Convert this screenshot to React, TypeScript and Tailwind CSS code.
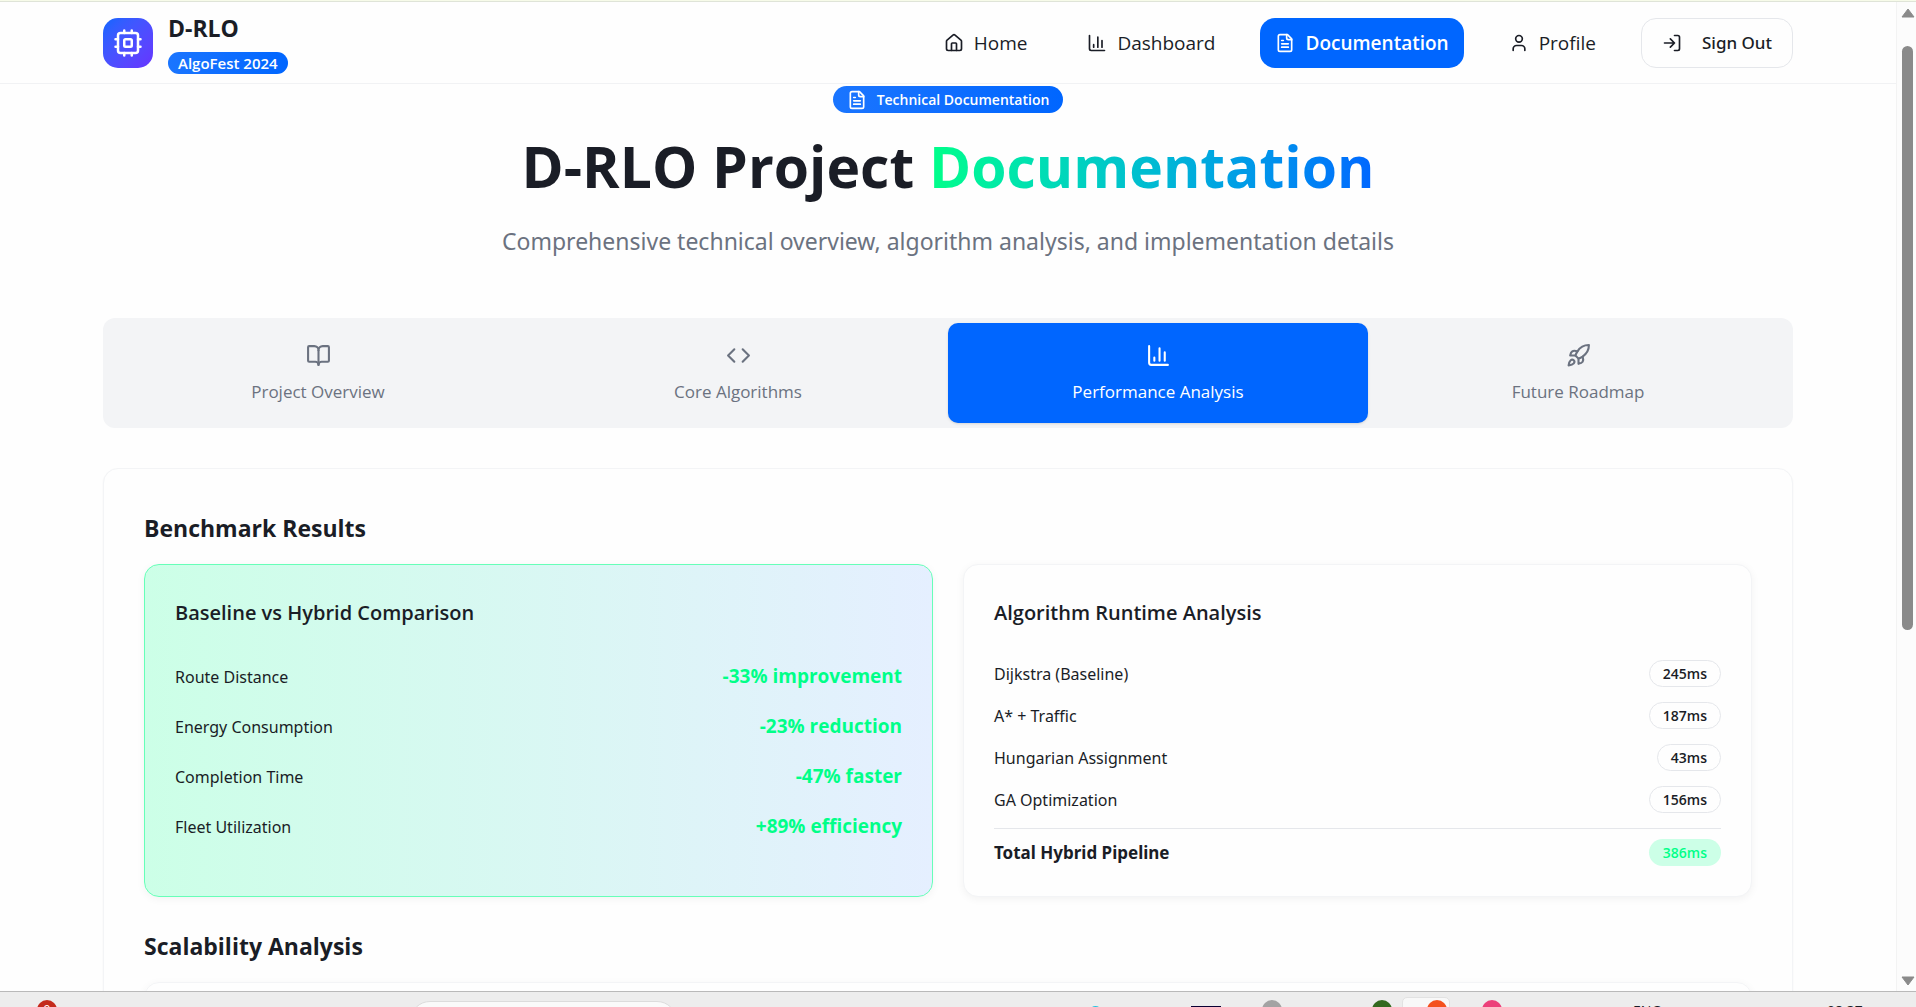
import React from "react";
import type { ReactNode } from "react";

function Icon({ className, children }: { className: string; children: ReactNode }) {
  return (
    <svg
      viewBox="0 0 24 24"
      fill="none"
      stroke="currentColor"
      strokeWidth={2}
      strokeLinecap="round"
      strokeLinejoin="round"
      aria-hidden="true"
      className={className}
    >
      {children}
    </svg>
  );
}

const cpuShape = (
  <>
    <rect x="4" y="4" width="16" height="16" rx="2" />
    <rect x="9" y="9" width="6" height="6" rx="1" />
    <path d="M15 2v2M15 20v2M2 15h2M2 9h2M20 15h2M20 9h2M9 2v2M9 20v2" />
  </>
);
const homeShape = (
  <>
    <path d="M15 21v-8a1 1 0 0 0-1-1h-4a1 1 0 0 0-1 1v8" />
    <path d="M3 10a2 2 0 0 1 .709-1.528l7-5.999a2 2 0 0 1 2.582 0l7 5.999A2 2 0 0 1 21 10v9a2 2 0 0 1-2 2H5a2 2 0 0 1-2-2z" />
  </>
);
const chartShape = (
  <>
    <path d="M3 3v16a2 2 0 0 0 2 2h16" />
    <path d="M18 17V9M13 17V5M8 17v-3" />
  </>
);
const fileShape = (
  <>
    <path d="M15 2H6a2 2 0 0 0-2 2v16a2 2 0 0 0 2 2h12a2 2 0 0 0 2-2V7Z" />
    <path d="M14 2v4a2 2 0 0 0 2 2h4" />
    <path d="M10 9H8M16 13H8M16 17H8" />
  </>
);
const userShape = (
  <>
    <path d="M19 21v-2a4 4 0 0 0-4-4H9a4 4 0 0 0-4 4v2" />
    <circle cx="12" cy="7" r="4" />
  </>
);
const logInShape = (
  <>
    <path d="M15 3h4a2 2 0 0 1 2 2v14a2 2 0 0 1-2 2h-4" />
    <path d="m10 17 5-5-5-5M15 12H3" />
  </>
);
const bookShape = (
  <>
    <path d="M12 7v14" />
    <path d="M3 18a1 1 0 0 1-1-1V4a1 1 0 0 1 1-1h5a4 4 0 0 1 4 4 4 4 0 0 1 4-4h5a1 1 0 0 1 1 1v13a1 1 0 0 1-1 1h-6a3 3 0 0 0-3 3 3 3 0 0 0-3-3z" />
  </>
);
const codeShape = <path d="m16 18 6-6-6-6M8 6l-6 6 6 6" />;
const rocketShape = (
  <>
    <path d="M4.5 16.5c-1.5 1.26-2 5-2 5s3.74-.5 5-2c.71-.84.7-2.13-.09-2.91a2.18 2.18 0 0 0-2.91-.09z" />
    <path d="m12 15-3-3a22 22 0 0 1 2-3.95A12.88 12.88 0 0 1 22 2c0 2.72-.78 7.5-6 11a22.35 22.35 0 0 1-4 2z" />
    <path d="M9 12H4s.55-3.03 2-4c1.62-1.08 5 0 5 0" />
    <path d="M12 15v5s3.03-.55 4-2c1.08-1.62 0-5 0-5" />
  </>
);

const navItems = [
  { label: "Home", shape: homeShape, active: false },
  { label: "Dashboard", shape: chartShape, active: false },
  { label: "Documentation", shape: fileShape, active: true },
  { label: "Profile", shape: userShape, active: false },
];

const tabs = [
  { label: "Project Overview", shape: bookShape, active: false },
  { label: "Core Algorithms", shape: codeShape, active: false },
  { label: "Performance Analysis", shape: chartShape, active: true },
  { label: "Future Roadmap", shape: rocketShape, active: false },
];

const comparison = [
  { label: "Route Distance", value: "-33% improvement" },
  { label: "Energy Consumption", value: "-23% reduction" },
  { label: "Completion Time", value: "-47% faster" },
  { label: "Fleet Utilization", value: "+89% efficiency" },
];

const runtimes = [
  { label: "Dijkstra (Baseline)", value: "245ms" },
  { label: "A* + Traffic", value: "187ms" },
  { label: "Hungarian Assignment", value: "43ms" },
  { label: "GA Optimization", value: "156ms" },
];

function Header() {
  return (
    <header className="flex items-center justify-between border-b border-[#f1f2f4] px-[103px] pt-[10px] pb-[9px]">
      <div className="flex items-center gap-[15px]">
        <div className="flex size-[50px] items-center justify-center rounded-[15px] bg-linear-to-br from-[#0066ff] to-[#6633ff] text-white">
          <Icon className="size-[30px]">{cpuShape}</Icon>
        </div>
        <div className="flex flex-col items-start gap-[7px]">
          <span className="text-[23px] leading-[33px] font-bold">D-RLO</span>
          <span className="rounded-full bg-linear-to-r from-[#1a75ff] to-[#0066ff] px-[10px] text-[15px] leading-[22px] font-semibold text-white">
            AlgoFest 2024
          </span>
        </div>
      </div>
      <nav className="flex items-center gap-[30px]" aria-label="Main">
        {navItems.map((item) => (
          <a
            key={item.label}
            href="#"
            aria-current={item.active ? "page" : undefined}
            className={
              item.active
                ? "flex h-[50px] items-center gap-[10px] rounded-[15px] bg-[#0066ff] px-[15px] text-[19px] font-semibold text-white"
                : "flex h-[50px] items-center gap-[10px] rounded-[15px] px-[15px] text-[19px] font-medium"
            }
          >
            <Icon className="size-5">{item.shape}</Icon>
            {item.label}
          </a>
        ))}
        <button
          type="button"
          className="flex h-[50px] items-center gap-5 rounded-[15px] border border-[#e5e7eb] px-5 font-['Noto_Sans','Open_Sans',sans-serif] text-[17px] font-medium"
        >
          <Icon className="size-5">{logInShape}</Icon>
          Sign Out
        </button>
      </nav>
    </header>
  );
}

function Hero() {
  return (
    <section className="flex flex-col items-center pt-0.5">
      <span className="flex h-[27px] items-center gap-[10px] rounded-full bg-linear-to-r from-[#1a75ff] to-[#0066ff] px-[14px] text-[14px] font-semibold text-white">
        <Icon className="size-5">{fileShape}</Icon>
        Technical Documentation
      </span>
      <h1 className="mt-[23px] text-[57px] leading-[60px] font-bold">
        D-RLO Project{" "}
        <span className="bg-linear-to-r from-[#00ff88] to-[#0066ff] bg-clip-text text-transparent">Documentation</span>
      </h1>
      <p className="mt-7 font-['Noto_Sans','Open_Sans',sans-serif] text-[23px] leading-[35px] text-[#6b7280]">
        Comprehensive technical overview, algorithm analysis, and implementation details
      </p>
    </section>
  );
}

function Tabs() {
  return (
    <div role="tablist" className="mx-[103px] mt-[59px] grid grid-cols-4 rounded-[12px] bg-[#f3f4f6] p-[5px]">
      {tabs.map((tab) => (
        <button
          key={tab.label}
          type="button"
          role="tab"
          aria-selected={tab.active}
          className={
            tab.active
              ? "flex flex-col items-center gap-3 rounded-[10px] bg-[#0066ff] py-5 text-[17px] leading-[23px] font-medium text-white shadow-sm"
              : "flex flex-col items-center gap-3 rounded-[10px] py-5 text-[17px] leading-[23px] font-medium text-[#6b7280]"
          }
        >
          <Icon className="size-[25px]">{tab.shape}</Icon>
          {tab.label}
        </button>
      ))}
    </div>
  );
}

function Results() {
  return (
    <section className="mx-[103px] mt-10 rounded-[15px] border border-[#f3f4f6] bg-[#fefefe] p-10 shadow-xs">
      <h2 className="mb-4 text-[23px] leading-[39px] font-bold">Benchmark Results</h2>
      <div className="grid grid-cols-2 gap-[30px]">
        <section className="rounded-[15px] border border-[#66ffb8] bg-linear-to-r from-[#ccffe7] to-[#e5efff] p-[30px] shadow-[0_2px_8px_rgba(0,0,0,0.05)]">
          <h3 className="text-[20px] leading-9 font-semibold">Baseline vs Hybrid Comparison</h3>
          <dl className="mt-7 flex flex-col gap-[15px]">
            {comparison.map((row) => (
              <div key={row.label} className="flex h-[35px] items-center justify-between">
                <dt className="font-['Noto_Sans','Open_Sans',sans-serif] text-[16px]">{row.label}</dt>
                <dd className="text-[19px] font-bold text-[#00ff88]">{row.value}</dd>
              </div>
            ))}
          </dl>
        </section>
        <section className="rounded-[15px] border border-[#f3f4f6] bg-[#fefefe] p-[30px] shadow-[0_2px_8px_rgba(0,0,0,0.05)]">
          <h3 className="text-[20px] leading-9 font-semibold">Algorithm Runtime Analysis</h3>
          <dl className="mt-[29px] flex flex-col gap-[15px]">
            {runtimes.map((row) => (
              <div key={row.label} className="flex h-[27px] items-center justify-between">
                <dt className="font-['Noto_Sans','Open_Sans',sans-serif] text-[16px]">{row.label}</dt>
                <dd className="rounded-full border border-[#e5e7eb] px-[13px] text-[14px] leading-[25px] font-semibold">
                  {row.value}
                </dd>
              </div>
            ))}
            <div className="flex items-center justify-between border-t border-[#e5e7eb] pt-[10px]">
              <dt className="font-['Noto_Sans','Open_Sans',sans-serif] text-[17px] leading-[27px] font-bold">
                Total Hybrid Pipeline
              </dt>
              <dd className="rounded-full bg-[#ccffe7] px-[14px] text-[14px] leading-[27px] font-semibold text-[#00ff88]">
                386ms
              </dd>
            </div>
          </dl>
        </section>
      </div>
      <h2 className="mt-[30px] mb-4 text-[23px] leading-[39px] font-bold">Scalability Analysis</h2>
      <div className="h-40 rounded-[15px] border border-[#f3f4f6] shadow-[0_2px_8px_rgba(0,0,0,0.05)]" />
    </section>
  );
}

function ScrollBar() {
  return (
    <div className="flex w-5 shrink-0 flex-col items-center border-l border-[#f3f3f3] bg-[#fcfcfc] pt-[6px] pb-[5px] pl-0.5 text-[#8a8a8a]">
      <svg viewBox="0 0 14 10" className="h-[10px] w-[14px]" aria-hidden="true">
        <path d="M7 1 13 9H1z" fill="currentColor" stroke="currentColor" strokeLinejoin="round" />
      </svg>
      <div className="mt-7 h-[584px] w-[11px] rounded-full bg-[#8a8a8a]" />
      <svg viewBox="0 0 14 10" className="mt-auto h-[10px] w-[14px]" aria-hidden="true">
        <path d="M1 1h12L7 9z" fill="currentColor" stroke="currentColor" strokeLinejoin="round" />
      </svg>
    </div>
  );
}

/* The desktop task bar; only its top edge is in view below the page. */
function TaskBar() {
  return (
    <footer className="relative h-4 shrink-0 overflow-hidden border-t border-[#b9b9b9] bg-[#ededed]">
      <span className="absolute top-2 left-[37px] size-5 rounded-full bg-[#c42b1c] text-center text-[12px] leading-5 text-white">
        9
      </span>
      <span className="absolute top-[9px] left-[410px] h-10 w-[267px] rounded-full border border-[#dcdcdc] bg-[#fafafa]" />
      <span className="absolute top-[14px] left-[1089px] h-4 w-[13px] rounded-t-full bg-[#22c3e0]" />
      <span className="absolute top-[14px] left-[1191px] h-4 w-[30px] bg-[#0a0033]" />
      <span className="absolute top-[14px] left-[1254px] h-4 w-4 rounded-tl-full bg-[#e8392b]" />
      <span className="absolute top-2 left-[1262px] size-5 rounded-full bg-[#a3a3a3]" />
      <span className="absolute top-[14px] left-[1365px] h-4 w-4 rounded-tl-full bg-[#e8392b]" />
      <span className="absolute top-2 left-[1372px] size-5 rounded-full bg-[#33691e]" />
      <span className="absolute top-[5px] left-[1402px] h-12 w-12 rounded-[5px] border border-[#e2e2e2] bg-[#f8f8f8]" />
      <span className="absolute top-[14px] left-[1420px] h-4 w-4 rounded-tl-full bg-[#e8392b]" />
      <span className="absolute top-2 left-[1427px] size-5 rounded-full bg-[#f4511e]" />
      <span className="absolute top-[14px] left-[1475px] h-4 w-4 rounded-tl-full bg-[#e8392b]" />
      <span className="absolute top-2 left-[1482px] size-5 rounded-full bg-[#ec407a]" />
      <span className="absolute top-[9px] left-[1633px] text-[14px] leading-5">ENG</span>
      <span className="absolute top-[9px] left-[1827px] text-[14px] leading-5">08:37</span>
    </footer>
  );
}

export default function App() {
  return (
    <div className="flex h-screen flex-col overflow-hidden bg-[#fefefe] font-['Open_Sans','Noto_Sans',sans-serif] text-[#1a1d26]">
      <div className="h-0.5 shrink-0 border-b border-[#dfe4d8] bg-[#f7fbe9]" />
      <div className="flex min-h-0 flex-1">
        <div className="min-w-0 flex-1 overflow-hidden">
          <Header />
          <main>
            <Hero />
            <Tabs />
            <Results />
          </main>
        </div>
        <ScrollBar />
      </div>
      <TaskBar />
    </div>
  );
}
